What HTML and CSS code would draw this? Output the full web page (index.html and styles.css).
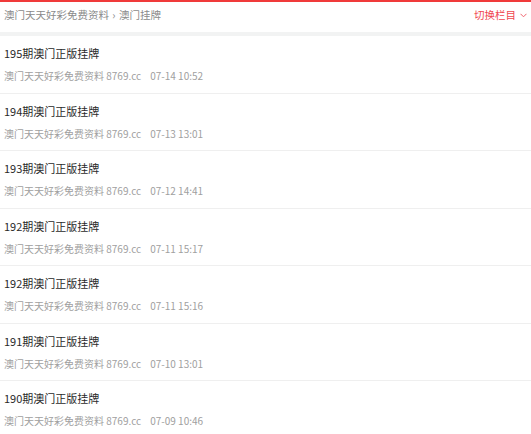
FILE: index.html
```html
<!DOCTYPE html>
<html lang="zh-cn">
<head>
<meta charset="UTF-8">
<meta name="viewport" content="width=device-width, initial-scale=1.0">
<title>澳门挂牌</title>
<link rel="stylesheet" href="styles.css">
</head>
<body>
  <header class="top-bar">
    <div class="crumbs">
      <a href="#">澳门天天好彩免费资料</a>
      <span class="sep">›</span>
      <a href="#">澳门挂牌</a>
    </div>
    <a class="switch" href="#">切换栏目
      <svg class="arrow" width="7" height="5" viewBox="0 0 7 5"><path d="M0.5 0.8 L3.5 3.8 L6.5 0.8" fill="none" stroke="#f0646e" stroke-width="1"/></svg>
    </a>
  </header>

  <ul class="list">
    <li class="item">
      <a class="title" href="#">195期澳门正版挂牌</a>
      <div class="meta"><span>澳门天天好彩免费资料 8769.cc</span><span>07-14 10:52</span></div>
    </li>
    <li class="item">
      <a class="title" href="#">194期澳门正版挂牌</a>
      <div class="meta"><span>澳门天天好彩免费资料 8769.cc</span><span>07-13 13:01</span></div>
    </li>
    <li class="item">
      <a class="title" href="#">193期澳门正版挂牌</a>
      <div class="meta"><span>澳门天天好彩免费资料 8769.cc</span><span>07-12 14:41</span></div>
    </li>
    <li class="item">
      <a class="title" href="#">192期澳门正版挂牌</a>
      <div class="meta"><span>澳门天天好彩免费资料 8769.cc</span><span>07-11 15:17</span></div>
    </li>
    <li class="item">
      <a class="title" href="#">192期澳门正版挂牌</a>
      <div class="meta"><span>澳门天天好彩免费资料 8769.cc</span><span>07-11 15:16</span></div>
    </li>
    <li class="item">
      <a class="title" href="#">191期澳门正版挂牌</a>
      <div class="meta"><span>澳门天天好彩免费资料 8769.cc</span><span>07-10 13:01</span></div>
    </li>
    <li class="item">
      <a class="title" href="#">190期澳门正版挂牌</a>
      <div class="meta"><span>澳门天天好彩免费资料 8769.cc</span><span>07-09 10:46</span></div>
    </li>
  </ul>
</body>
</html>
```

FILE: styles.css
```css
* {
  margin: 0;
  padding: 0;
  box-sizing: border-box;
}

body {
  font-family: "Noto Sans CJK SC", "Noto Sans", sans-serif;
  background-color: #fff;
  color: #333;
}

a {
  text-decoration: none;
  color: inherit;
}

.top-bar {
  display: flex;
  justify-content: space-between;
  align-items: center;
  height: 36px;
  padding: 0 4px 4px;
  border-top: 2px solid #f03a3a;
  border-bottom: 4px solid #f2f3f3;
  font-size: 10.5px;
  line-height: 14px;
}

.crumbs {
  color: #8a8a8a;
}

.crumbs .sep {
  margin: 0 1px;
}

.switch {
  display: flex;
  align-items: center;
  gap: 4px;
  color: #f0464e;
}

.arrow {
  margin-top: 1px;
}

.list {
  list-style: none;
}

.item {
  padding: 10px 4px 9.5px;
  border-bottom: 1px solid #efefef;
}

.title {
  display: block;
  font-size: 11px;
  line-height: 14px;
  color: #2a2a2a;
}

.meta {
  display: flex;
  gap: 9px;
  margin-top: 9px;
  font-size: 10px;
  line-height: 14px;
  color: #a0a0a0;
}
```
